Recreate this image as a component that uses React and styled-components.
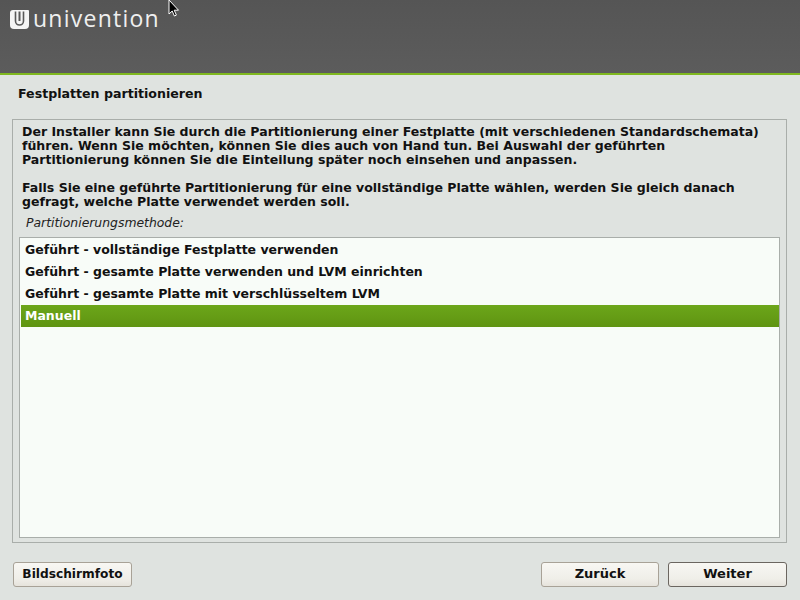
import React from 'react';
import styled, { createGlobalStyle } from 'styled-components';

const Global = createGlobalStyle`
  html, body { margin: 0; padding: 0; background: #dfe3e0; }
  body { font-family: "DejaVu Sans", sans-serif; }
`;

const Page = styled.div`
  position: relative;
  width: 800px;
  height: 600px;
  overflow: hidden;
  display: flex;
  flex-direction: column;
  background: #dfe3e0;
`;

const Banner = styled.header`
  height: 73px;
  flex: none;
  box-sizing: content-box;
  border-bottom: 2px solid #7fb81f;
  background: linear-gradient(#555555, #5c5c5c);
  display: flex;
  align-items: flex-start;
  padding-left: 10px;
  gap: 4px;
`;

const LogoMark = styled.svg`
  width: 19px;
  height: 19px;
  margin-top: 10px;
`;

const LogoText = styled.span`
  font-family: "Open Sans", sans-serif;
  font-weight: 400;
  font-size: 23px;
  line-height: 24px;
  letter-spacing: 1.25px;
  margin-top: 6px;
  color: #efefef;
`;

const Title = styled.h1`
  margin: 0;
  padding: 11px 18px 0;
  height: 34px;
  box-sizing: border-box;
  font-size: 12.6px;
  line-height: 16px;
  font-weight: bold;
  color: #111;
`;

const Frame = styled.section`
  margin: 10px 13px 0 12px;
  height: 424px;
  box-sizing: border-box;
  border: 1px solid #a9aeaa;
  padding: 5px 6px 4px 6px;
  display: flex;
  flex-direction: column;
`;

const Intro = styled.p`
  margin: 0 0 14px;
  padding-left: 3px;
  font-size: 12.52px;
  line-height: 14px;
  font-weight: bold;
  color: #111;
  white-space: pre-line;
`;

const Prompt = styled.div`
  padding-left: 7px;
  margin-top: -8px;
  height: 22px;
  font-size: 12.4px;
  line-height: 15px;
  font-style: italic;
  color: #222;
`;

const List = styled.ul`
  list-style: none;
  margin: 0;
  padding: 1px 0 1px 1px;
  flex: 1;
  border: 1px solid #a9aeaa;
  background: #f8fcf8;
`;

const Row = styled.li`
  height: 22px;
  box-sizing: border-box;
  padding-left: 4px;
  font-size: 12.5px;
  line-height: 21px;
  font-weight: bold;
  color: ${p => (p.$active ? '#ffffff' : '#111111')};
  background: ${p => (p.$active ? 'linear-gradient(#6ca61a, #5f9411)' : 'transparent')};
`;

const Footer = styled.footer`
  display: flex;
  justify-content: space-between;
  padding: 19px 13px 0;
`;

const Group = styled.div`
  display: flex;
  gap: 9px;
`;

const Button = styled.button`
  width: ${p => p.$width}px;
  height: 25px;
  padding: 0 0 2px;
  border: 1px solid ${p => (p.$focus ? '#6b6660' : '#a8a297')};
  border-radius: 3px;
  background: linear-gradient(#f8f7f3, #efeee8 70%, #e6e3dc);
  font-family: "DejaVu Sans", sans-serif;
  font-size: ${p => p.$size || 13}px;
  font-weight: bold;
  color: #111;
`;

const Cursor = styled.svg`
  position: absolute;
  left: 168px;
  top: 0;
  width: 12px;
  height: 17px;
`;

const rows = [
  'Geführt - vollständige Festplatte verwenden',
  'Geführt - gesamte Platte verwenden und LVM einrichten',
  'Geführt - gesamte Platte mit verschlüsseltem LVM',
  'Manuell',
];

export default function App() {
  return (
    <Page>
      <Global />
      <Banner>
        <LogoMark viewBox="0 0 19 19">
          <path d="M3 0h15a1 1 0 0 1 1 1v14a4 4 0 0 1-4 4H4a4 4 0 0 1-4-4V3a3 3 0 0 1 3-3z" fill="#f4f4f4" />
          <path d="M5.500 1.500v9.500a4 4 0 0 0 8 0V1.500" fill="none" stroke="#585858" strokeWidth="1.6" />
          <path d="M9.500 1.500v9.500" fill="none" stroke="#585858" strokeWidth="2" />
        </LogoMark>
        <LogoText>univention</LogoText>
      </Banner>
      <Title>Festplatten partitionieren</Title>
      <Frame>
        <Intro>
          {'Der Installer kann Sie durch die Partitionierung einer Festplatte (mit verschiedenen Standardschemata)\nführen. Wenn Sie möchten, können Sie dies auch von Hand tun. Bei Auswahl der geführten\nPartitionierung können Sie die Einteilung später noch einsehen und anpassen.\n\nFalls Sie eine geführte Partitionierung für eine vollständige Platte wählen, werden Sie gleich danach\ngefragt, welche Platte verwendet werden soll.'}
        </Intro>
        <Prompt>Partitionierungsmethode:</Prompt>
        <List>
          {rows.map((r, i) => (
            <Row key={r} $active={i === 3}>{r}</Row>
          ))}
        </List>
      </Frame>
      <Footer>
        <Button $width={119} $size={12.2}>Bildschirmfoto</Button>
        <Group>
          <Button $width={118}>Zurück</Button>
          <Button $width={119} $focus>Weiter</Button>
        </Group>
      </Footer>
      <Cursor viewBox="0 0 12 17">
        <path d="M1 0v14l3.200-3 2.200 5 2-.9-2.200-4.900H10.500z" fill="#000" stroke="#fff" strokeWidth="1" />
      </Cursor>
    </Page>
  );
}
